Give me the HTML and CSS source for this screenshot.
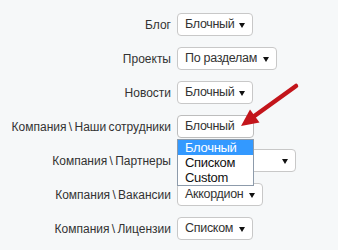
FILE: index.html
```html
<!DOCTYPE html>
<html lang="ru">
  <head>
    <meta charset="UTF-8" />
    <meta name="viewport" content="width=device-width, initial-scale=1.0" />
    <title>Настройки разделов</title>
    <link rel="stylesheet" href="styles.css">
  </head>
  <body>
    <main class="page">
      <form class="settings">
        <div class="row">
          <label class="row-label">Блог</label>
          <div class="select w76">Блочный<span class="caret"></span></div>
        </div>
        <div class="row">
          <label class="row-label">Проекты</label>
          <div class="select w100">По разделам<span class="caret"></span></div>
        </div>
        <div class="row">
          <label class="row-label">Новости</label>
          <div class="select w76">Блочный<span class="caret"></span></div>
        </div>
        <div class="row">
          <label class="row-label">Компания \ Наши сотрудники</label>
          <div class="select-wrap">
            <!-- caret is hidden under the pointer arrow -->
            <div class="select w77 open">Блочный</div>
            <!-- Open option list -->
            <ul class="options">
              <li class="selected">Блочный</li>
              <li>Списком</li>
              <li>Custom</li>
            </ul>
          </div>
        </div>
        <div class="row">
          <label class="row-label">Компания \ Партнеры</label>
          <div class="select w119"><span class="caret"></span></div>
        </div>
        <div class="row">
          <label class="row-label">Компания \ Вакансии</label>
          <div class="select w86">Аккордион<span class="caret"></span></div>
        </div>
        <div class="row">
          <label class="row-label">Компания \ Лицензии</label>
          <div class="select w76">Списком<span class="caret"></span></div>
        </div>
      </form>

      <!-- Red pointer arrow -->
      <svg class="pointer" width="338" height="250" viewBox="0 0 338 250">
        <line x1="296" y1="86" x2="253" y2="117" stroke="#c3151b" stroke-width="4.5" stroke-linecap="round" />
        <polygon points="241,126 250,109.5 259.5,122.5" fill="#c3151b" />
      </svg>
    </main>
  </body>
</html>
```

FILE: styles.css
```css
* {
  margin: 0;
  padding: 0;
  box-sizing: border-box;
}

html,
body {
  width: 100%;
  height: 100%;
}

body {
  background-color: #f6f8f9;
  font-family: "Liberation Sans", Arial, sans-serif;
  font-size: 12px;
  color: #333;
}

.page {
  position: relative;
  width: 338px;
  height: 250px;
  overflow: hidden;
}

.settings {
  display: flex;
  flex-direction: column;
  gap: 11px;
  padding-top: 13px;
}

.row {
  display: grid;
  grid-template-columns: 171px auto;
  column-gap: 6px;
  align-items: center;
  height: 23px;
}

.row-label {
  text-align: right;
  white-space: nowrap;
  word-spacing: -1px;
}

.select-wrap {
  position: relative;
}

.select {
  position: relative;
  height: 23px;
  line-height: 21px;
  padding-left: 7px;
  font-size: 12.5px;
  letter-spacing: -0.3px;
  background-color: #fff;
  border: 1px solid #c8c8c8;
  border-radius: 4px;
  white-space: nowrap;
}

.select.open {
  border-color: #bdbdbd;
}

.caret {
  position: absolute;
  right: 7px;
  top: 9px;
  width: 0;
  height: 0;
  border-left: 3px solid transparent;
  border-right: 3px solid transparent;
  border-top: 5px solid #111;
}

.w76 { width: 76px; }
.w77 { width: 77px; }
.w86 { width: 86px; }
.w100 { width: 100px; }
.w119 { width: 119px; }

.options {
  position: absolute;
  left: 0;
  top: 24px;
  width: 77px;
  list-style: none;
  background-color: #fff;
  border: 1px solid #8d9bab;
  z-index: 2;
}

.options li {
  height: 15px;
  line-height: 15px;
  padding-left: 7px;
  font-size: 13px;
  letter-spacing: -0.3px;
  color: #111;
}

.options li.selected {
  background-color: #3399ff;
  color: #fff;
}

.pointer {
  position: absolute;
  left: 0;
  top: 0;
  pointer-events: none;
  z-index: 3;
}
```
